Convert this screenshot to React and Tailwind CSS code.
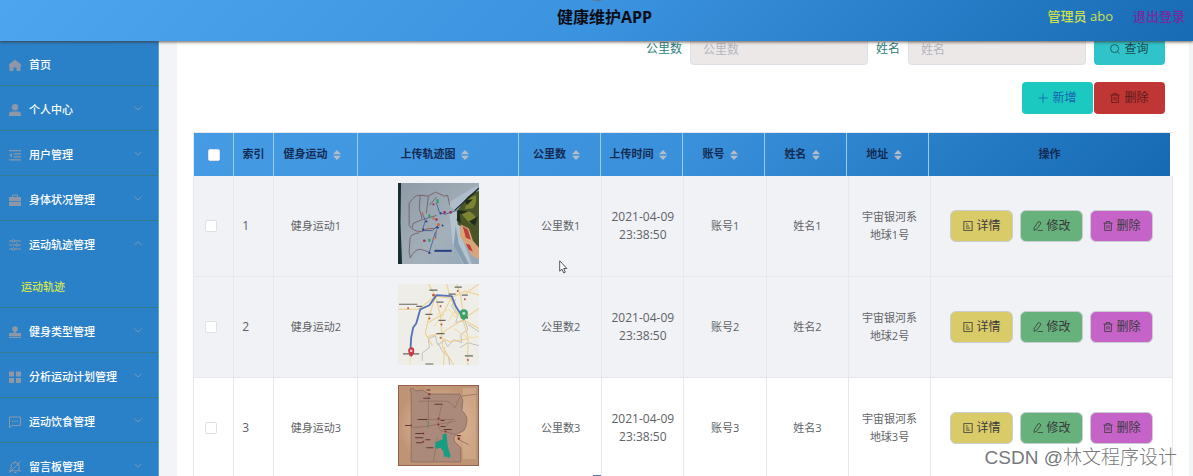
import React, { useState } from 'react';

const FONT = "font-['Open_Sans','Noto_Sans_CJK_SC',sans-serif]";

const menu = [
  { label: '首页', icon: 'home' },
  { label: '个人中心', icon: 'user', arrow: true },
  { label: '用户管理', icon: 'list', arrow: true },
  { label: '身体状况管理', icon: 'case', arrow: true },
  { label: '运动轨迹管理', icon: 'sliders', arrow: true, children: ['运动轨迹'] },
  { label: '健身类型管理', icon: 'stamp', arrow: true },
  { label: '分析运动计划管理', icon: 'grid', arrow: true },
  { label: '运动饮食管理', icon: 'chat', arrow: true },
  { label: '留言板管理', icon: 'mute', arrow: true },
];

const columns = [
  { label: '健身运动', sort: true },
  { label: '上传轨迹图', sort: true },
  { label: '公里数', sort: true },
  { label: '上传时间', sort: true },
  { label: '账号', sort: true },
  { label: '姓名', sort: true },
  { label: '地址', sort: true },
  { label: '操作' },
];

const stroke = { fill: 'none', stroke: 'currentColor', strokeWidth: 1 };

const paths = {
  home: <path fill="currentColor" d="M6 .5 0 5.600V7.500h.5V12h4V8.500h3V12h4V7.500h.5V5.600z" />,
  user: (
    <g fill="currentColor">
      <circle cx="6" cy="3.200" r="3.200" />
      <path d="M0 12v-1.800q0-2.800 2.800-2.800h6.400q2.800 0 2.800 2.800V12z" />
    </g>
  ),
  list: (
    <path fill="currentColor" d="M0 1h12v1.300H0zM4.500 4.200H12v1.300H4.500zM4.500 7.200H12v1.300H4.500zM0 10.200h12v1.300H0zM0 6.300 3 4.200v4.300z" />
  ),
  case: (
    <g>
      <path {...stroke} d="M3.500 3V1h5v2" />
      <path fill="currentColor" d="M0 3h12v4H0zM0 7.700h12V12H0z" />
    </g>
  ),
  sliders: (
    <g {...stroke}>
      <path d="M0 2h3M6 2h6M0 6h6.500M9.500 6H12M0 10h3M6 10h6" />
      <circle cx="4.500" cy="2" r="1.300" />
      <circle cx="8" cy="6" r="1.300" />
      <circle cx="4.500" cy="10" r="1.300" />
    </g>
  ),
  stamp: (
    <g fill="currentColor">
      <path d="M4.700 4.500h2.600V7H12v3H0V7h4.700zM0 10.800h12V12H0z" />
      <circle cx="6" cy="3" r="2.800" />
    </g>
  ),
  grid: <path fill="currentColor" d="M0 .5h5v5H0zM7 .5h5v5H7zM0 7h5v5H0zM7 7h5v5H7z" />,
  chat: (
    <g>
      <path {...stroke} d="M.5 1h11v8.500H3L.5 11.500z" />
      <path fill="currentColor" d="M3 4.800h1.200V6H3zM5.400 4.800h1.200V6H5.400zM7.800 4.800H9V6H7.800z" />
    </g>
  ),
  mute: (
    <path {...stroke} d="M0 9.800h12M2 9.500V5q0-3.500 4-3.500T10 5v4.500M5 11.500h2.500M6 0v1.500M11.500.5.5 11.500" />
  ),
  search: (
    <g {...stroke}>
      <circle cx="5.500" cy="5.500" r="4.800" />
      <path d="m8.800 9.200 2.500 2.500" />
    </g>
  ),
  plus: <path {...stroke} d="M6 .5v11M.5 6h11" />,
  trash: <path {...stroke} d="M.5 2.500h11M4 2.500v-2h4v2M2 2.500v9h8v-9M4.800 5v4M7.200 5v4" />,
  doc: <path {...stroke} d="M1 .5h10v11H1zM3.500 3.500h2M3.500 6h3.500M3.500 8.500h5" />,
  edit: <path {...stroke} d="M1.500 8 6 1.200Q7.500 0 8.700 1.300T9 3.500L4.500 9.800 1.300 11.300zM5.500 11.500H12" />,
};

function Icon({ name, className = 'size-[10px]' }) {
  return (
    <svg viewBox="0 0 12 12" className={`shrink-0 ${className}`} aria-hidden="true">
      {paths[name]}
    </svg>
  );
}

function Chevron({ open }) {
  return (
    <svg viewBox="0 0 8 5" className="w-2 h-[5px] mb-1 text-[#7398b8]" aria-hidden="true">
      <path {...stroke} d={open ? 'M.5 4 4 .8 7.500 4' : 'M.5 .8 4 4 7.500 .8'} />
    </svg>
  );
}

function SortIcon() {
  return (
    <svg viewBox="0 0 8 10" className="w-2 h-[10px]" aria-hidden="true">
      <path fill="#b5bcc6" d="M4 0 8 4.300H0zM4 10 0 5.700h8z" />
    </svg>
  );
}

// --- Track thumbnails ---
const thumb = 'block size-[81px] mx-auto';

function PaperMap() {
  return (
    <svg viewBox="0 0 80 80" className={thumb} role="img" aria-label="轨迹图1">
      <defs>
        <linearGradient id="paper" x1="0" y1="0" x2="1" y2="1">
          <stop offset="0" stopColor="#8e9ba6" />
          <stop offset="0.600" stopColor="#a3b0ba" />
          <stop offset="1" stopColor="#94a7b8" />
        </linearGradient>
      </defs>
      <path fill="url(#paper)" d="M0 0h80v80H0z" />
      <path fill="#182d31" d="M0 0h3L2.500 40 4 80H0z" />
      <path fill="#b4c3ce" d="m51 31 8-4 3 24 11 29h-9L54 60z" />
      <path fill="#869eb2" d="m57 42 3 18 10 20h-5L55 62z" />
      <path fill="#aebdc9" d="M80 5 56 27l-7-7L77 3z" />
      <path fill="#4a5527" d="M80 8q-9 2-14 9l-8 11 1 13 8 5 13 24z" />
      <path fill="#7c8432" d="M68 18q4-5 9-6 1 8-3 13l-8 1zM63 31l7-3q5 2 7 7l-6 5z" />
      <path fill="#1e2c1d" d="m59 27 10 1-8 3 1 9-4-3zM70 38l9-5-3 9zM66 17l8-1-6 6z" />
      <path fill="#d9a477" d="m62 41 8 4 4 12 6 7v11q-5-1-8-5l-6-10-5-8z" />
      <path fill="#b8403f" d="m64 43 5 3 3 10-5-2zM67 60l4 1 3 7-4-2z" />
      <path stroke="#17252b" strokeWidth="1.200" fill="none" d="M80 5 56 27" />
      <g fill="none" stroke="#775e69" strokeWidth=".9">
        <path d="M11 20q6-9 11-8l8 1 7-4 9 4 3-1 2 10M11 20v22q4 6 12 6l7-3h7M22 12l-1 13 3 11-9 4-1 4M30 13l-2 17M31 22l7-8M25 36l13-4M21 49q-9 2-9 5l-1 14 1 6q6-11 12-8l6 2M38 46l-1 9" />
      </g>
      <path fill="none" stroke="#4863a0" strokeWidth=".9" d="m38 20 3 9 5 2 12-4M24 30l3 7-3 10 10 0 5-5M37 48l-2 7-4 13" />
      <path stroke="#293f86" strokeWidth="2" d="M36 67h17" />
      <g fill="#303d87">
        <circle cx="42" cy="30" r="1.100" /><circle cx="28" cy="38" r="1.100" /><circle cx="39" cy="44" r="1.300" /><circle cx="25" cy="46" r="1.100" /><circle cx="31" cy="69" r="1.200" /><circle cx="44" cy="42" r="1" />
      </g>
      <g fill="#a12d56">
        <circle cx="46" cy="29" r="1.300" /><circle cx="52" cy="29" r="1.300" /><circle cx="38" cy="36" r="1.300" /><circle cx="26" cy="57" r="1.300" /><circle cx="35" cy="21" r="1.100" />
      </g>
      <g fill="#c76f4a">
        <circle cx="24" cy="30" r="1.200" /><circle cx="35" cy="35" r="1.200" /><circle cx="40" cy="41" r="1.600" /><circle cx="30" cy="45" r="1.100" /><circle cx="35" cy="55" r="1.100" />
      </g>
      <path fill="#2a9b61" d="M38 16h2v4h-2zM30 31h2v3h-2zM30 55h2v3h-2z" />
    </svg>
  );
}

function RoadMap() {
  return (
    <svg viewBox="0 0 80 80" className={thumb} role="img" aria-label="轨迹图2">
      <path fill="#efede7" d="M0 0h80v80H0z" />
      <g fill="none" stroke="#bdbdba" strokeWidth=".9">
        <path d="m57 15-4 7 6 9-2 7 9-2 3 9-7 5 1 8-8-3-6 7-3-6-7 4-2-9-7 3 1 9-7 5v8M40 59l4 8 6 5 1 8M69 40l11 7M61 63l8-5 11 3" />
      </g>
      <g fill="none" stroke="#edcf8a" strokeWidth="1">
        <path d="M0 25h20l17-13 15 2M30 0l7 12-7 22-3 15 7 12M37 12l5 20 2 30 11 18M48 0l4 15-8 15-14 8M52 14l14-7 14 4M52 14l6 14 6 7 16-11M64 35l5 17v28M64 35l-20 13-15 4M64 35l16 9M58 0l4 12 3 23M80 0 66 10M42 53l9 4 18-3M46 62l-1 18" />
      </g>
      <path fill="none" stroke="#f3dfaa" strokeWidth="1" d="m38 30 12-5 9 10M35 42l10-11M55 44l14 9 11-1M12 72v8M50 37l5-9 11 7" />
      <path fill="none" stroke="#5472b7" strokeWidth="1.800" strokeLinejoin="round" d="m12 71 1-18 2-10 3-4 4-14 9-4 7-10 15 1 4 10 7 11" />
      <g stroke="#6b6962" strokeWidth="1.200">
        <path d="M1 20h18M31 6h8M50 10h7M56 3h7M38 18h7M27 30h7M40 36h7M38 49h8M66 71h8M27 79h8M63 11h6M5 69h16M18 22h6" />
      </g>
      <path stroke="#4a5948" strokeWidth="2" d="M62 33h7" />
      <g fill="#bd5942">
        <circle cx="10" cy="24" r="1" /><circle cx="35" cy="11" r="1.300" /><circle cx="42" cy="22" r="1" /><circle cx="31" cy="34" r="1" /><circle cx="43" cy="40" r="1" /><circle cx="42" cy="53" r="1" /><circle cx="59" cy="7" r="1" /><circle cx="66" cy="15" r="1" /><circle cx="69" cy="75" r="1" />
      </g>
      <path fill="#c53a45" d="M13 72q-3-3-3-6t3-3.500T16 66t-3 6z" />
      <path fill="#38a166" d="M65 36q-4-3-4-7t4-4 4 4-4 7z" />
      <circle cx="13" cy="66" r="1.300" fill="#f1cccf" />
      <circle cx="65" cy="29" r="1.500" fill="#b8e0c4" />
    </svg>
  );
}

function BrownMap() {
  return (
    <svg viewBox="0 0 80 80" className={thumb} role="img" aria-label="轨迹图3">
      <defs>
        <radialGradient id="parchment">
          <stop offset="0.500" stopColor="#d3ae90" />
          <stop offset="1" stopColor="#bf9474" />
        </radialGradient>
      </defs>
      <path fill="url(#parchment)" d="M0 0h80v80H0z" />
      <path fill="none" stroke="#96604c" d="M.5.5h79v79H.5z" />
      <path fill="#d9b696" d="M64 3h13v70H64z" opacity=".5" />
      <path fill="#ac8a7b" stroke="#8a695b" strokeWidth=".8" d="M12 4q3-2 5 2l7-1 7 4h30l3 6-1 10q6 6 5 11-1 7-3 9l-8 4q-3 4-1 7l6 6v14H13V8z" />
      <path fill="none" stroke="#92705f" strokeWidth=".8" d="M20 16h28q5 1 8 7l5-11M30 10v32M43 20l-4 19 3 6 16 4M18 34h38M14 42l13-1 30-5M39 52l-4 23M48 40l5-6M60 54l10 5M63 11l15-2" />
      <g stroke="#5c3735" strokeWidth="1">
        <path d="M25 13h7M36 19h8M20 34h9M42 35h4M42 41h5M45 44h8M17 48h8M17 52h8M18 57h6M27 54h5M28 62h7M28 5h4M58 50h4M7 40h5" />
      </g>
      <g fill="#873535">
        <circle cx="31" cy="9" r="1.200" /><circle cx="13" cy="40" r="1" /><circle cx="40" cy="33" r="1" /><circle cx="40" cy="39" r="1" /><circle cx="25" cy="48" r="1" /><circle cx="25" cy="56" r="1" /><circle cx="60" cy="53" r="1.300" /><circle cx="47" cy="46" r="1" />
      </g>
      <path fill="#189d83" d="M44 49q3-2 4 0l1 11 3 10q-2 4-4 0l-1 1q-2 1-2-5l-3-4-4 1q-2-1-1-7h2l3-2h2z" />
      <path fill="none" stroke="#4c9a83" strokeWidth=".8" d="m28 36 2 2-2 4" />
    </svg>
  );
}

const rows = [
  { id: 1, image: <PaperMap /> },
  { id: 2, image: <RoadMap /> },
  { id: 3, image: <BrownMap /> },
];

function Cols() {
  return (
    <colgroup>
      <col className="w-[4.1%]" />
      <col className="w-[4.1%]" />
      <col className="w-[8.6%]" />
      <col className="w-[16.5%]" />
      <col className="w-[8.4%]" />
      <col className="w-[8.4%]" />
      <col className="w-[8.4%]" />
      <col className="w-[8.4%]" />
      <col className="w-[8.4%]" />
      <col />
    </colgroup>
  );
}

function Check({ label, checked, onChange, className = '' }) {
  return (
    <input
      type="checkbox"
      aria-label={label}
      checked={checked}
      onChange={onChange}
      className={`block size-3 appearance-none rounded-xs border border-[#dfe1e6] bg-white checked:bg-blue-500 ${className}`}
    />
  );
}

function RowButton({ icon, color, children }) {
  return (
    <button type="button" className={`flex items-center justify-center gap-1 w-[63px] h-8 rounded-md border border-[#c9cdd2] text-xs text-[#3a3a3c] ${color}`}>
      <Icon name={icon} />
      {children}
    </button>
  );
}

function Header() {
  return (
    <header className="relative z-10 grid grid-cols-[1fr_auto_1fr] items-center h-[41px] shrink-0 pl-6 pr-2 pb-2 bg-linear-[135deg,#4ea5ef,#3b92de_50%,#176bb4] shadow-[0_1px_3px_rgba(60,50,40,0.8)]">
      <h1 className="col-start-2 text-base font-bold text-[#0a0d14]">健康维护APP</h1>
      <div className="flex justify-end gap-5 text-[13px] font-medium">
        <span className="text-[#cfe04a]">管理员 abo</span>
        <a href="#logout" className="text-[#762a9c]">退出登录</a>
      </div>
    </header>
  );
}

function Sidebar() {
  return (
    <nav className="w-[159px] shrink-0 bg-[#2b81c8] border-r border-[#5b9fc4]">
      <ul>
        {menu.map((item) => (
          <li key={item.label} className="border-b border-[#347b8d]">
            <a href="#menu" className="flex items-center gap-2 h-11 pt-1 pl-[9px] pr-4 text-[11px] text-white font-medium">
              <Icon name={item.icon} className="size-3 text-[#8d97a5]" />
              <span className="flex-1 whitespace-nowrap">{item.label}</span>
              {item.arrow && <Chevron open={!!item.children} />}
            </a>
            {item.children?.map((child) => (
              <a key={child} href="#track" className="flex items-center h-[42px] pt-0.5 pl-[21px] text-[11px] font-medium text-[#d3e650]">
                {child}
              </a>
            ))}
          </li>
        ))}
      </ul>
    </nav>
  );
}

function SearchForm() {
  const input = 'w-[178px] h-8 px-3 rounded-sm border border-[#dcdfe6] bg-[#ece8e8] text-xs placeholder:text-[#b4b5bd]';
  return (
    <form className="flex justify-end items-center gap-2 -mt-2 pr-2 text-xs text-[#2c7e7c]" onSubmit={(e) => e.preventDefault()}>
      <label htmlFor="distance">公里数</label>
      <input id="distance" placeholder="公里数" className={input} />
      <label htmlFor="name">姓名</label>
      <input id="name" placeholder="姓名" className={input} />
      <button type="submit" className="flex items-center justify-center gap-1 w-[71px] h-8 rounded-sm bg-[#30c4ca] text-[#1d4a50]">
        <Icon name="search" />
        查询
      </button>
    </form>
  );
}

function TrackTable() {
  const [selected, setSelected] = useState([]);

  const toggle = (id) =>
    setSelected(selected.includes(id) ? selected.filter((s) => s !== id) : [...selected, id]);

  const toggleAll = () => setSelected(selected.length === rows.length ? [] : rows.map((r) => r.id));

  const cell = 'border-r border-b border-[#e6e8ee]';
  const head = 'border-r border-[#9ccbe8] last:border-r-0 p-0 font-bold';

  return (
    <div className="mt-[18px] border-l border-t border-[#e6e8ee]">
      <div className="pr-[3px]">
        <table className="w-full table-fixed border-separate border-spacing-0 bg-linear-[135deg,#459ce5,#3a90da_50%,#166ab4] text-[11px] text-[#142c55]">
          <Cols />
          <thead>
            <tr className="h-[43px]">
              <th className={head}>
                <Check label="全选" className="mx-auto" checked={selected.length === rows.length} onChange={toggleAll} />
              </th>
              <th className={head}>索引</th>
              {columns.map((col) => (
                <th key={col.label} className={head}>
                  <span className={`inline-flex items-center gap-[6px] whitespace-nowrap ${col.sort ? 'pr-1.5' : ''}`}>
                    {col.label}
                    {col.sort && <SortIcon />}
                  </span>
                </th>
              ))}
            </tr>
          </thead>
        </table>
      </div>
      <table className="w-full table-fixed border-separate border-spacing-0 text-[11px] leading-[18px] text-center text-[#606266]">
        <Cols />
        <tbody>
          {rows.map(({ id, image }) => (
            <tr key={id} className={id < 3 ? 'h-[101px] bg-[#f1f2f6]' : 'h-[101px] bg-white'}>
              <td className={`${cell} pl-[11px]`}>
                <Check label={`选择${id}`} checked={selected.includes(id)} onChange={() => toggle(id)} />
              </td>
              <td className={`${cell} pl-2 text-left text-xs`}>{id}</td>
              <td className={`${cell} px-2`}>{`健身运动${id}`}</td>
              <td className={`${cell} px-2 pt-[7px] align-top`}>{image}</td>
              <td className={`${cell} px-2`}>{`公里数${id}`}</td>
              <td className={`${cell} px-2 text-xs leading-[18px]`}>2021-04-09 23:38:50</td>
              <td className={`${cell} px-2`}>{`账号${id}`}</td>
              <td className={`${cell} px-2`}>{`姓名${id}`}</td>
              <td className={`${cell} px-2`}>
                <span className="block">宇宙银河系</span>
                <span className="block">{`地球${id}号`}</span>
              </td>
              <td className={`${cell} px-2`}>
                <div className="flex justify-center gap-[7px]">
                  <RowButton icon="doc" color="bg-[#dacb69]">详情</RowButton>
                  <RowButton icon="edit" color="bg-[#67b17c]">修改</RowButton>
                  <RowButton icon="trash" color="bg-[#c563c8]">删除</RowButton>
                </div>
              </td>
            </tr>
          ))}
        </tbody>
      </table>
    </div>
  );
}

export default function App() {
  return (
    <div className={`relative flex flex-col h-screen overflow-hidden bg-[#f3f4f8] ${FONT}`}>
      <Header />
      <div className="flex flex-1 min-h-0">
        <Sidebar />
        <main className="flex-1 min-w-0 ml-[18px] mr-1 pl-4 pr-4 bg-white">
          <SearchForm />
          <div className="flex justify-end gap-px mt-[17px] pr-2 text-xs">
            <button type="button" className="flex items-center justify-center gap-1 w-[71px] h-8 rounded-sm bg-[#1cc9c0] text-[#1765b0]">
              <Icon name="plus" />
              新增
            </button>
            <button type="button" className="flex items-center justify-center gap-1 w-[71px] h-8 rounded-sm bg-[#c03634] text-[#5f1a1c]">
              <Icon name="trash" />
              删除
            </button>
          </div>
          <TrackTable />
        </main>
      </div>

      {/* Window edge grips */}
      <div className="absolute z-20 top-0 left-1/2 -translate-x-1 w-2 h-px bg-[#5c7896]" />
      <div className="absolute z-20 bottom-0 left-1/2 -translate-x-1 w-2 h-px bg-[#4f74a0]" />

      {/* Mouse pointer */}
      <svg viewBox="0 0 9 14" className="absolute left-[559px] top-[260px] w-[9px] h-[14px]" aria-hidden="true">
        <path d="M.7.8v10.400l2.300-2 1.700 3.700 1.600-.7L4.700 8.500h3.200z" fill="#fff" stroke="#55575c" />
      </svg>
      <p className="absolute right-4 bottom-1 text-[19px] leading-7 font-light text-[#77787c] [text-shadow:1px_1px_0_#fff] font-['Liberation_Sans','Noto_Sans_CJK_SC',sans-serif]">
        CSDN @林文程序设计
      </p>
    </div>
  );
}
